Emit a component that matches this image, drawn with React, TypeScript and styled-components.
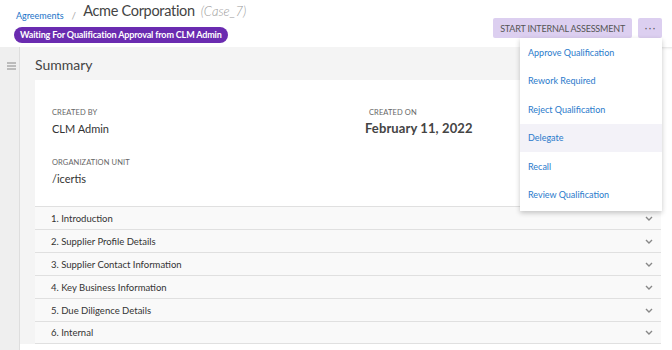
import { createGlobalStyle } from "styled-components";
import styled from "styled-components";

const GlobalStyle = createGlobalStyle`
  body {
    margin: 0;
    font-family: Lato, "Open Sans", sans-serif;
    background: #fff;
  }
`;

const menuItems = [
  "Approve Qualification",
  "Rework Required",
  "Reject Qualification",
  "Delegate",
  "Recall",
  "Review Qualification",
];

const sections = [
  "1. Introduction",
  "2. Supplier Profile Details",
  "3. Supplier Contact Information",
  "4. Key Business Information",
  "5. Due Diligence Details",
  "6. Internal",
];

function Chevron() {
  return (
    <svg width="8" height="5" viewBox="0 0 8 5">
      <path d="M1 1 L4 4 L7 1" fill="none" stroke="#888" strokeWidth="1.4" />
    </svg>
  );
}

function Hamburger() {
  return (
    <svg width="9" height="8" viewBox="0 0 9 8">
      <path d="M0 1H9M0 4H9M0 7H9" stroke="#888" strokeWidth="1" />
    </svg>
  );
}

export default function App() {
  return (
    <Page>
      <GlobalStyle />
      <Header>
        <div>
          <Crumbs>
            <a className="link">Agreements</a>
            <span className="sep">/</span>
            <span className="title">Acme Corporation</span>
            <span className="case">(Case_7)</span>
          </Crumbs>
          <Badge>Waiting For Qualification Approval from CLM Admin</Badge>
        </div>
        <Actions>
          <ActionButton>START INTERNAL ASSESSMENT</ActionButton>
          <MoreButton>···</MoreButton>
          <Menu>
            {menuItems.map((m) => (
              <MenuItem key={m} $active={m === "Delegate"}>
                {m}
              </MenuItem>
            ))}
          </Menu>
        </Actions>
      </Header>
      <Body>
        <Sidebar>
          <Hamburger />
        </Sidebar>
        <Main>
          <SummaryTitle>Summary</SummaryTitle>
          <Card>
            <Field>
              <label>CREATED BY</label>
              <p>CLM Admin</p>
            </Field>
            <Field $shift>
              <label>CREATED ON</label>
              <p className="date">February 11, 2022</p>
            </Field>
            <Field>
              <label>ORGANIZATION UNIT</label>
              <p>/icertis</p>
            </Field>
          </Card>
          {sections.map((s) => (
            <Row key={s}>
              <span>{s}</span>
              <Chevron />
            </Row>
          ))}
        </Main>
      </Body>
    </Page>
  );
}

const Page = styled.div`
  width: 672px;
  height: 350px;
  overflow: hidden;
  position: relative;
  background: #fff;
`;

const Header = styled.div`
  height: 47px;
  display: flex;
  justify-content: space-between;
  padding: 0 10px 0 14px;
  box-sizing: border-box;
  position: relative;
  z-index: 2;
`;

const Crumbs = styled.div`
  display: flex;
  align-items: center;
  height: 22px;
  .link {
    color: #1a73c8;
    font-size: 9px;
    margin: 8px 0 0 2px;
  }
  .sep {
    color: #aaa;
    font-size: 10px;
    margin: 7px 7px 0 8px;
  }
  .title {
    color: #444;
    font-size: 14.5px;
    letter-spacing: -0.3px;
    line-height: 20px;
  }
  .case {
    color: #999;
    font-size: 13px;
    font-style: italic;
    font-weight: 300;
    margin-left: 6px;
  }
`;

const Badge = styled.div`
  display: inline-block;
  background: #6a2bb0;
  color: #fff;
  font-size: 9px;
  font-weight: 700;
  letter-spacing: -0.15px;
  line-height: 16px;
  padding: 0 6px;
  border-radius: 8px;
  margin-top: 3px;
`;

const Actions = styled.div`
  display: flex;
  align-items: flex-start;
  gap: 6px;
  padding-top: 18px;
  position: relative;
`;

const ActionButton = styled.button`
  height: 20px;
  border: none;
  border-radius: 2px;
  background: #dccff0;
  color: #555;
  font-family: Lato, sans-serif;
  font-size: 9px;
  padding: 0 7px;
  letter-spacing: -0.2px;
`;

const MoreButton = styled.button`
  width: 24px;
  height: 20px;
  border: none;
  border-radius: 2px;
  background: #dccff0;
  color: #555;
  font-size: 12px;
  line-height: 20px;
  padding: 0;
`;

const Menu = styled.div`
  position: absolute;
  top: 38px;
  right: 0;
  width: 142px;
  background: #fff;
  box-shadow: 0 2px 5px rgba(0, 0, 0, 0.22);
  padding: 0 0 2px;
`;

const MenuItem = styled.div<{ $active?: boolean }>`
  height: 28.5px;
  padding-left: 8px;
  font-size: 9px;
  color: #2a7acb;
  background: ${(p) => (p.$active ? "#f3f2f8" : "transparent")};
  display: flex;
  align-items: center;
`;

const Body = styled.div`
  display: flex;
  height: 303px;
  box-shadow: inset 0 3px 3px -2px rgba(0, 0, 0, 0.12);
`;

const Sidebar = styled.div`
  width: 20px;
  background: #efefef;
  border-right: 1px solid #dedede;
  display: flex;
  justify-content: center;
  padding: 15px 0 0 3px;
  box-sizing: border-box;
  flex-shrink: 0;
`;

const Main = styled.div`
  width: 641px;
  background: #f4f4f4;
  padding-left: 15px;
  box-sizing: border-box;
  align-self: flex-start;
`;

const SummaryTitle = styled.div`
  height: 33px;
  line-height: 35px;
  font-size: 14px;
  color: #444;
`;

const Card = styled.div`
  background: #fff;
  height: 126px;
  box-sizing: border-box;
  padding: 27px 0 0 17px;
  display: grid;
  grid-template-columns: 313px 1fr;
  grid-template-rows: 50px 40px;
`;

const Field = styled.div<{ $shift?: boolean }>`
  label {
    display: block;
    font-size: 7.5px;
    color: #666;
    letter-spacing: 0.1px;
    line-height: 12px;
    margin-left: ${(p) => (p.$shift ? "4px" : "0")};
  }
  p {
    margin: 3px 0 0;
    font-size: 11px;
    color: #333;
  }
  .date {
    margin-top: 1px;
    font-size: 13px;
    font-weight: 700;
    letter-spacing: 0.1px;
    color: #444;
  }
`;

const Row = styled.div`
  height: 23px;
  background: #f9f9f9;
  border-top: 1px solid #e0e0e0;
  box-sizing: border-box;
  display: flex;
  align-items: center;
  justify-content: space-between;
  padding: 0 8px 0 16px;
  font-size: 9.5px;
  color: #333;
  &:last-child {
    border-bottom: 1px solid #e0e0e0;
  }
`;
